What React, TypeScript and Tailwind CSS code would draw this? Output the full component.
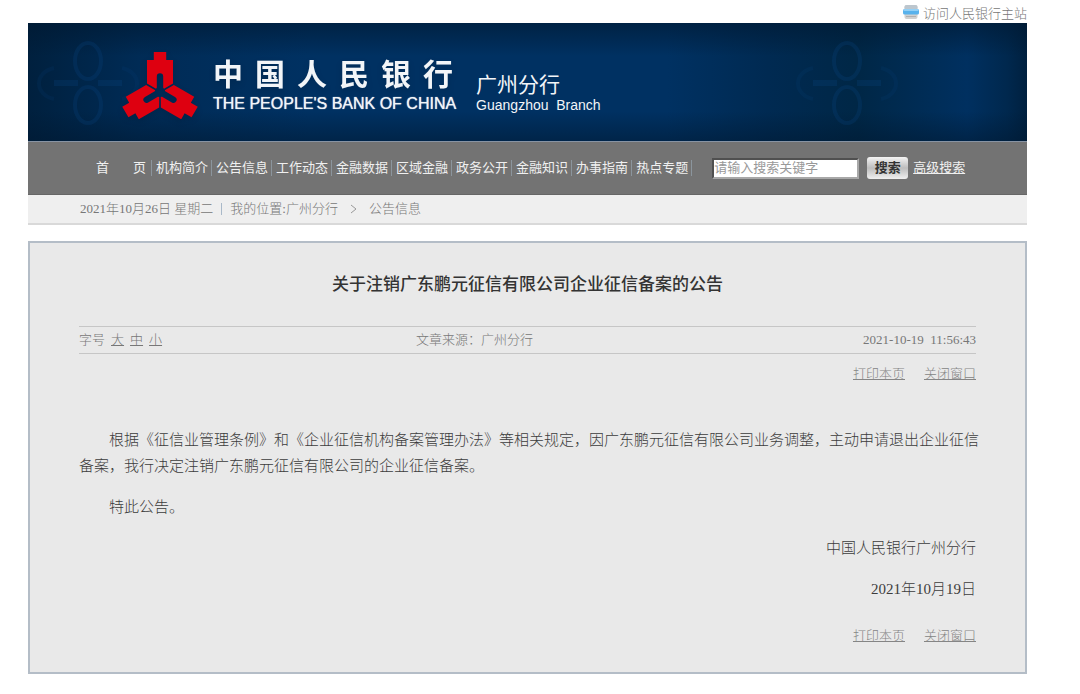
import React from "react";

const navItems = ["机构简介", "公告信息", "工作动态", "金融数据", "区域金融", "政务公开", "金融知识", "办事指南", "热点专题"];
const bankName = ["中", "国", "人", "民", "银", "行"];
const armAngles = [0, 120, 240];

function SiteIcon() {
  return (
    <svg width="16" height="16" viewBox="0 0 16 16" aria-hidden="true">
      <rect x="1.5" y="1" width="13" height="14" rx="2" fill="#d0d0d0" />
      <rect x="1.5" y="1" width="13" height="5" rx="2" fill="#bcc6ce" />
      <rect x="0" y="5" width="16" height="5.5" rx="1.5" fill="#58b2ec" />
      <rect x="0.5" y="5" width="15" height="2" rx="1" fill="#93d0f6" />
      <path d="M3 12.5h10" stroke="#b0b0b0" strokeWidth="1" />
    </svg>
  );
}

function Emblem() {
  return (
    <svg width="76" height="68" viewBox="-38 -41 76 68" aria-hidden="true" className="drop-shadow-md">
      {armAngles.map((angle) => (
        <path
          key={angle}
          transform={`rotate(${angle})`}
          fill="#de0010"
          d="M-6.200-40H6.200V-32H13V-8.500L4-3.200L3.200-4.200V-15.500a3.200 3.200 0 0 0-6.400 0V-4.200L-4-3.200L-13-8.500V-32H-6.200z"
        />
      ))}
    </svg>
  );
}

function Rosette() {
  return (
    <svg width="120" height="118" viewBox="-60 -59 120 118" aria-hidden="true">
      <g fill="none" stroke="#0a4a8a" strokeOpacity="0.22" strokeWidth="4">
        <ellipse cx="0" cy="-21" rx="13" ry="18" />
        <ellipse cx="0" cy="23" rx="13" ry="18" />
        <path d="M-34 1h24M10 1h24" strokeWidth="6" />
        <path d="M-34-14a20 16 0 0 0 0 31M34-14a20 16 0 0 1 0 31" strokeOpacity="0.12" />
      </g>
    </svg>
  );
}

function PageLinks() {
  return (
    <div className="flex justify-end gap-[19px] text-[13px] leading-5 text-[#858585]">
      <a href="#print" className="underline">打印本页</a>
      <a href="#close" className="underline">关闭窗口</a>
    </div>
  );
}

export default function App() {
  return (
    <div className="ml-7 mr-[53px] bg-white pb-5 font-['Liberation_Serif','Noto_Sans_CJK_SC',serif] text-[13px] font-light text-[#777777]">
      <div className="flex h-[23px] items-center justify-end gap-1">
        <SiteIcon />
        <a href="#main-site" className="pt-1 leading-5">访问人民银行主站</a>
      </div>

      <header className="relative h-[118px] overflow-hidden bg-[#002f5f] bg-[linear-gradient(to_bottom,rgba(0,24,48,0.6)_0%,transparent_28%,transparent_75%,rgba(0,24,48,0.5)_100%),linear-gradient(to_right,#00203e_0%,#002b55_11%,#003162_28%,#003162_64%,#002a52_74%,#002746_83%,#003060_94%,#00284e_98%,#00203f_100%)] font-['Liberation_Sans','Noto_Sans_CJK_SC',sans-serif] text-[#f2f5f8]">
        <div className="absolute left-0 top-0">
          <Rosette />
        </div>
        <div className="absolute right-[120px] top-0">
          <Rosette />
        </div>
        <div className="relative flex items-start pl-[94px] pt-7">
          <Emblem />
          <div className="ml-[15px] pt-2">
            <div className="flex gap-3 text-[30px] font-bold leading-8 drop-shadow-md">
              {bankName.map((c) => (
                <span key={c}>{c}</span>
              ))}
            </div>
            <div className="mt-[3px] text-[16px] font-normal leading-5 [text-shadow:0_0_1px_#f2f5f8]">THE PEOPLE'S BANK OF CHINA</div>
          </div>
          <div className="ml-5 pt-[22px] font-normal">
            <div className="text-[21px] leading-6">广州分行</div>
            <div className="whitespace-pre text-[14px] leading-4">Guangzhou  Branch</div>
          </div>
        </div>
      </header>

      <nav className="flex h-[54px] items-center border-y border-t-[#8793a3] border-b-[#666666] bg-[#737373] pl-[68px] font-normal text-[#f0f0f0]">
        <a href="#home" className="flex w-[56px] justify-between border-r border-[#8b959d] pr-[5px] leading-4">
          <span>首</span>
          <span>页</span>
        </a>
        {navItems.map((item) => (
          <a key={item} href="#section" className="whitespace-nowrap border-r border-[#8b959d] pl-1 pr-[3px] leading-4">
            {item}
          </a>
        ))}
        <form className="ml-5 flex items-center" onSubmit={(e) => e.preventDefault()}>
          <input
            aria-label="搜索关键字"
            placeholder="请输入搜索关键字"
            className="h-[21px] w-[147px] border-2 border-b-[#a8a8a8] border-l-[#505050] border-r-[#a8a8a8] border-t-[#505050] bg-white text-[13px] text-[#333333] outline-none placeholder:text-[#999999]"
          />
          <button type="submit" className="ml-2 h-[22px] w-[41px] rounded-[3px] bg-gradient-to-b from-[#f4f4f4] via-[#bdbdbd] to-[#f0f0f0] text-[13px] font-bold text-[#333333]">
            搜索
          </button>
          <a href="#advanced" className="ml-[5px] whitespace-nowrap underline">高级搜索</a>
        </form>
      </nav>

      <div className="flex h-[30px] items-center whitespace-pre border-b-2 border-[#d9d9d9] bg-[#efefef] pl-[52px]">
        <span>2021年10月26日 星期二</span>
        <span className="mx-2 h-3 border-l border-[#a9b9c9]" />
        <span>我的位置:</span>
        <a href="#branch">广州分行</a>
        <svg width="7" height="10" viewBox="0 0 7 10" className="mx-3" aria-hidden="true">
          <path d="M1 1l5 4-5 4" fill="none" stroke="#999999" />
        </svg>
        <a href="#notices">公告信息</a>
      </div>

      <main className="mt-4 border-2 border-[#b4bdc7] bg-[#e9e9e9] px-[49px] pb-[26px] pt-7">
        <h1 className="text-center text-[17px] font-medium leading-7 text-[#333333]">关于注销广东鹏元征信有限公司企业征信备案的公告</h1>
        <div className="mt-[27px] grid h-7 grid-cols-3 items-center border-y border-[#c6c6c6]">
          <div className="flex gap-[6px]">
            <span>字号</span>
            <a href="#large" className="underline">大</a>
            <a href="#medium" className="underline">中</a>
            <a href="#small" className="underline">小</a>
          </div>
          <div className="pl-[38px]">文章来源：广州分行</div>
          <time className="whitespace-pre text-right">2021-10-19  11:56:43</time>
        </div>
        <div className="mt-[10px]">
          <PageLinks />
        </div>
        <article className="-mr-2 mt-[43px] text-[15px] leading-[26px] text-[#3c3c3c]">
          <p className="indent-[2em]">
            根据《征信业管理条例》和《企业征信机构备案管理办法》等相关规定，因广东鹏元征信有限公司业务调整，主动申请退出企业征信备案，我行决定注销广东鹏元征信有限公司的企业征信备案。
          </p>
          <p className="mt-[15px] indent-[2em]">特此公告。</p>
          <p className="mr-2 mt-[15px] text-right">中国人民银行广州分行</p>
          <p className="mr-2 mt-[15px] text-right">2021年10月19日</p>
        </article>
        <div className="mt-6">
          <PageLinks />
        </div>
      </main>
    </div>
  );
}
